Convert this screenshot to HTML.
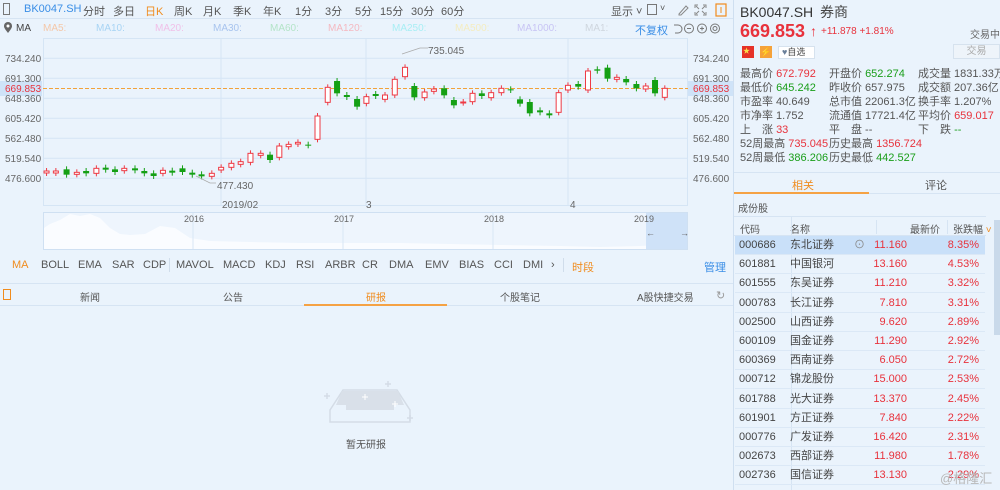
<!DOCTYPE html>
<html><head><meta charset="utf-8"><style>
*{margin:0;padding:0;box-sizing:border-box}
body{width:1000px;height:490px;background:#eaf3fc;font-family:"Liberation Sans","Noto Sans CJK SC",sans-serif;position:relative;overflow:hidden;color:#333}
.a{position:absolute;white-space:nowrap}
.tb{font-size:11px;color:#555;top:3px}
.ma{font-size:10px;top:23px}
.r{color:#e8323c}.g{color:#1a9e1a}
.st{font-size:11px;color:#555;line-height:14px}
.ind{font-size:11px;color:#555;top:259px}
.tab{font-size:10px;color:#555;top:289px}
.row{position:absolute;left:735px;width:250px;height:19px;font-size:11px;border-bottom:1px solid #dbe8f6}
.row span{position:absolute;top:0;line-height:19px}
</style></head><body>
<div class="a" style="left:0;top:0;width:733px;height:19px;border-bottom:1px solid #d6e4f3"></div>
<div class="a" style="left:3px;top:3px;width:7px;height:12px;border:1px solid #777"></div>
<div class="a tb" style="left:24px;color:#3a8ee6">BK0047.SH</div>
<div class="a tb" style="left:83px">分时</div>
<div class="a tb" style="left:113px">多日</div>
<div class="a tb" style="left:145px;color:#f08c1e">日K</div>
<div class="a tb" style="left:174px">周K</div>
<div class="a tb" style="left:203px">月K</div>
<div class="a tb" style="left:233px">季K</div>
<div class="a tb" style="left:263px">年K</div>
<div class="a tb" style="left:295px">1分</div>
<div class="a tb" style="left:325px">3分</div>
<div class="a tb" style="left:355px">5分</div>
<div class="a tb" style="left:380px">15分</div>
<div class="a tb" style="left:411px">30分</div>
<div class="a tb" style="left:441px">60分</div>
<div class="a tb" style="left:611px">显示 ˅</div>
<div class="a" style="left:647px;top:4px;width:10px;height:11px;border:1px solid #777"></div>
<div class="a tb" style="left:660px;font-size:9px">˅</div>
<svg class="a" style="left:676px;top:3px" width="60" height="14"><path d="M3 11 L10 3 L12 5 L5 12 L3 12Z" fill="none" stroke="#888"/><path d="M22 2h-3v3M27 2h3v3M22 12h-3v-3M27 12h3v-3M20 3l3 3M29 3l-3 3M20 11l3-3M29 11l-3-3" stroke="#888" fill="none"/><rect x="40" y="1" width="10" height="12" fill="none" stroke="#f08c1e" stroke-width="1.2"/><line x1="45" y1="4" x2="45" y2="10" stroke="#f08c1e"/></svg>
<svg class="a" style="left:3px;top:22px" width="10" height="12"><path d="M5 11 C1 6 1 5 1 4 A4 4 0 0 1 9 4 C9 5 9 6 5 11Z" fill="#666"/><circle cx="5" cy="4" r="1.5" fill="#fff"/></svg>
<div class="a ma" style="left:16px;color:#444">MA</div>
<div class="a ma" style="left:43px;color:#f4c7a8">MA5:</div>
<div class="a ma" style="left:96px;color:#a8d4f4">MA10:</div>
<div class="a ma" style="left:155px;color:#f0c0e8">MA20:</div>
<div class="a ma" style="left:213px;color:#a8c4ee">MA30:</div>
<div class="a ma" style="left:270px;color:#b4e4c8">MA60:</div>
<div class="a ma" style="left:328px;color:#f4b8c0">MA120:</div>
<div class="a ma" style="left:392px;color:#a8eef4">MA250:</div>
<div class="a ma" style="left:455px;color:#f4ecc0">MA500:</div>
<div class="a ma" style="left:517px;color:#c8c4f4">MA1000:</div>
<div class="a ma" style="left:585px;color:#cfd6de">MA1:</div>
<div class="a" style="left:635px;top:22px;font-size:11px;color:#3a8ee6">不复权</div>
<svg class="a" style="left:672px;top:22px" width="50" height="13"><path d="M2 3h4a4 4 0 0 1 0 8H3" fill="none" stroke="#777"/><circle cx="17" cy="6.5" r="4.5" fill="none" stroke="#777"/><line x1="15" y1="6.5" x2="19" y2="6.5" stroke="#777"/><circle cx="30" cy="6.5" r="4.5" fill="none" stroke="#777"/><path d="M28 6.5h4M30 4.5v4" stroke="#777"/><circle cx="43" cy="6.5" r="4.5" fill="none" stroke="#777"/><circle cx="43" cy="6.5" r="2" fill="none" stroke="#777"/></svg>
<svg class="a" style="left:0;top:38px" width="733" height="220">
<g stroke="#d5e5f5" fill="none">
<rect x="43.5" y="0.5" width="644" height="167"/>
<line x1="221" y1="0" x2="221" y2="168"/><line x1="366" y1="0" x2="366" y2="168"/><line x1="568" y1="0" x2="568" y2="168"/>
<line x1="43" y1="20.3" x2="688" y2="20.3"/><line x1="43" y1="40.3" x2="688" y2="40.3"/><line x1="43" y1="60.3" x2="688" y2="60.3"/><line x1="43" y1="80.3" x2="688" y2="80.3"/><line x1="43" y1="100.3" x2="688" y2="100.3"/><line x1="43" y1="120.3" x2="688" y2="120.3"/><line x1="43" y1="140.3" x2="688" y2="140.3"/>
</g>
<rect x="0" y="43" width="42" height="15" fill="#cfe3f8"/><rect x="688" y="43" width="45" height="15" fill="#cfe3f8"/>
<line x1="43" y1="50.5" x2="688" y2="50.5" stroke="#f2a23a" stroke-dasharray="4,2"/>
<g id="cd"></g>
<polyline points="402,16 420,10 428,10" fill="none" stroke="#aaa" stroke-width=".7"/>
<polyline points="196,138 210,145 216,145" fill="none" stroke="#aaa" stroke-width=".7"/>
<g font-size="10" fill="#666">
<text x="428" y="16">735.045</text><text x="217" y="151">477.430</text>
<text x="5" y="24">734.240</text><text x="5" y="44">691.300</text><text x="5" y="54" fill="#e8323c">669.853</text><text x="5" y="64">648.360</text><text x="5" y="84">605.420</text><text x="5" y="104">562.480</text><text x="5" y="124">519.540</text><text x="5" y="144">476.600</text>
<text x="693" y="24">734.240</text><text x="693" y="44">691.300</text><text x="693" y="54" fill="#e8323c">669.853</text><text x="693" y="64">648.360</text><text x="693" y="84">605.420</text><text x="693" y="104">562.480</text><text x="693" y="124">519.540</text><text x="693" y="144">476.600</text>
<text x="222" y="170">2019/02</text><text x="366" y="170">3</text><text x="570" y="170">4</text>
</g>
<rect x="43.5" y="174.5" width="644" height="37" fill="#eef5fd" stroke="#cfe0f2"/>
<path d="M44 211 L44 190 L50 186 L60 182 L70 176 L80 178 L90 176 L100 180 L110 190 L120 196 L130 197 L145 196 L160 188 L175 190 L190 200 L210 203 L250 204 L300 205 L350 205 L400 205 L450 206 L500 207 L560 208 L600 209 L640 208 L660 207 L680 200 L687 196 L687 211Z" fill="#fafcff"/>
<line x1="193" y1="175" x2="193" y2="211" stroke="#d8e6f5"/><line x1="343" y1="175" x2="343" y2="211" stroke="#d8e6f5"/><line x1="493" y1="175" x2="493" y2="211" stroke="#d8e6f5"/>
<rect x="646" y="175" width="41" height="36" fill="#cfe2f8"/>
<g font-size="9" fill="#666"><text x="184" y="184">2016</text><text x="334" y="184">2017</text><text x="484" y="184">2018</text><text x="634" y="184">2019</text><text x="646" y="198">←</text><text x="680" y="198">→</text></g>
</svg>
<div class="a ind" style="left:12px;color:#f08c1e">MA</div>
<div class="a ind" style="left:41px">BOLL</div>
<div class="a ind" style="left:78px">EMA</div>
<div class="a ind" style="left:112px">SAR</div>
<div class="a ind" style="left:143px">CDP</div>
<div class="a" style="left:169px;top:258px;width:1px;height:14px;background:#d0ddeb"></div>
<div class="a ind" style="left:176px">MAVOL</div>
<div class="a ind" style="left:223px">MACD</div>
<div class="a ind" style="left:265px">KDJ</div>
<div class="a ind" style="left:296px">RSI</div>
<div class="a ind" style="left:325px">ARBR</div>
<div class="a ind" style="left:362px">CR</div>
<div class="a ind" style="left:389px">DMA</div>
<div class="a ind" style="left:425px">EMV</div>
<div class="a ind" style="left:459px">BIAS</div>
<div class="a ind" style="left:494px">CCI</div>
<div class="a ind" style="left:523px">DMI</div>
<div class="a ind" style="left:551px">›</div>
<div class="a" style="left:563px;top:258px;width:1px;height:14px;background:#d0ddeb"></div>
<div class="a ind" style="left:572px;color:#f08c1e">时段</div>
<div class="a ind" style="left:704px;color:#3a8ee6">管理</div>
<div class="a" style="left:0;top:283px;width:733px;height:23px;border-top:1px solid #d6e4f3;border-bottom:1px solid #d6e4f3"></div>
<div class="a" style="left:3px;top:289px;width:8px;height:11px;border:1px solid #f08c1e"></div>
<div class="a tab" style="left:80px">新闻</div>
<div class="a tab" style="left:223px">公告</div>
<div class="a tab" style="left:366px;color:#f08c1e">研报</div>
<div class="a tab" style="left:500px">个股笔记</div>
<div class="a tab" style="left:637px">A股快捷交易</div>
<div class="a tab" style="left:716px;font-size:11px;color:#999">↻</div>
<div class="a" style="left:304px;top:304px;width:143px;height:2px;background:#f5a244"></div>
<svg class="a" style="left:315px;top:380px" width="105" height="45"><g stroke="#d4dce6" fill="none" stroke-width="1.5"><path d="M15 30 L28 10 H82 L95 30 V42 H15Z"/><path d="M12 13v6M9 16h6M95 35v6M92 38h6M73 1v6M70 4h6"/></g><path d="M27 11 H83 L89 25 H79 V30 H31 V25 H21Z" fill="#d9e0e9"/><g stroke="#fff"><path d="M50 14v6M47 17h6M80 21v6M77 24h6"/></g></svg>
<div class="a" style="left:346px;top:436px;font-size:10px;color:#555">暂无研报</div>
<div class="a" style="left:733px;top:0;width:1px;height:490px;background:#cfdff0"></div>
<div class="a" style="left:740px;top:3px;font-size:14px;color:#333;line-height:18px">BK0047.SH</div>
<div class="a" style="left:820px;top:3px;font-size:14px;color:#444;line-height:18px">券商</div>
<div class="a" style="left:740px;top:20px;font-size:18px;font-weight:bold;color:#e8323c;line-height:22px">669.853</div>
<div class="a" style="left:810px;top:22px;font-size:14px;font-weight:bold;color:#e8323c;line-height:18px">↑</div>
<div class="a" style="left:821px;top:26px;font-size:10px;color:#e8323c">+11.878 +1.81%</div>
<div class="a" style="left:970px;top:26px;font-size:10px;color:#666">交易中</div>
<div class="a" style="left:742px;top:46px;width:12px;height:12px;background:#e63228"><span style="color:#fbe04a;font-size:7px;position:absolute;left:1px;top:0">★</span></div>
<div class="a" style="left:760px;top:46px;width:12px;height:12px;background:#f5a23a;color:#fff;font-size:9px;text-align:center;line-height:12px">⚡</div>
<div class="a" style="left:778px;top:46px;width:37px;height:13px;background:#fff;border:1px solid #d6e2ee;font-size:9px;color:#444;padding-left:3px;line-height:11px"><span style="color:#6a7f99">♥</span>自选</div>
<div class="a" style="left:953px;top:44px;width:47px;height:15px;border:1px solid #d6e2ee;background:#eef4fa;font-size:10px;color:#aaa;text-align:center;line-height:13px">交易</div>
<div class="a st" style="left:740px;top:67px">最高价 <span class="r">672.792</span></div>
<div class="a st" style="left:740px;top:81px">最低价 <span class="g">645.242</span></div>
<div class="a st" style="left:740px;top:95px">市盈率 40.649</div>
<div class="a st" style="left:740px;top:109px">市净率 1.752</div>
<div class="a st" style="left:740px;top:123px">上　涨 <span class="r">33</span></div>
<div class="a st" style="left:740px;top:137px">52周最高 <span class="r">735.045</span></div>
<div class="a st" style="left:740px;top:151px">52周最低 <span class="g">386.206</span></div>
<div class="a st" style="left:829px;top:67px">开盘价 <span class="g">652.274</span></div>
<div class="a st" style="left:829px;top:81px">昨收价 657.975</div>
<div class="a st" style="left:829px;top:95px">总市值 22061.3亿</div>
<div class="a st" style="left:829px;top:109px">流通值 17721.4亿</div>
<div class="a st" style="left:829px;top:123px">平　盘 --</div>
<div class="a st" style="left:829px;top:137px">历史最高 <span class="r">1356.724</span></div>
<div class="a st" style="left:829px;top:151px">历史最低 <span class="g">442.527</span></div>
<div class="a st" style="left:918px;top:67px">成交量 1831.33万手</div>
<div class="a st" style="left:918px;top:81px">成交额 207.36亿</div>
<div class="a st" style="left:918px;top:95px">换手率 1.207%</div>
<div class="a st" style="left:918px;top:109px">平均价 <span class="r">659.017</span></div>
<div class="a st" style="left:918px;top:123px">下　跌 <span class="g">--</span></div>
<div class="a" style="left:865px;top:158px;font-size:9px;color:#888">^</div>
<div class="a" style="left:734px;top:172px;width:266px;height:22px;border-top:1px solid #d6e4f3;border-bottom:1px solid #d6e4f3"></div>
<div class="a" style="left:792px;top:177px;font-size:11px;color:#f08c1e">相关</div>
<div class="a" style="left:925px;top:177px;font-size:11px;color:#555">评论</div>
<div class="a" style="left:734px;top:192px;width:135px;height:2px;background:#f5a244"></div>
<div class="a" style="left:738px;top:200px;font-size:10px;color:#555">成份股</div>
<div class="a" style="left:734px;top:216px;width:252px;height:20px;border-top:1px solid #d6e4f3;border-bottom:1px solid #d6e4f3;font-size:10px;color:#555">
<span class="a" style="left:6px;top:4px">代码</span><span class="a" style="left:56px;top:4px">名称</span><span class="a" style="left:142px;top:3px;width:1px;height:14px;background:#d6e4f3"></span><span class="a" style="left:176px;top:4px">最新价</span><span class="a" style="left:213px;top:3px;width:1px;height:14px;background:#d6e4f3"></span><span class="a" style="left:219px;top:4px">张跌幅 <span style="color:#f08c1e">˅</span></span>
</div>
<div class="a" style="left:791px;top:216px;width:1px;height:274px;background:#d6e4f3"></div>
<div class="a" style="left:994px;top:220px;width:6px;height:115px;background:#c9d9ea"></div>
<div id="rows"></div>
<div class="a" style="left:940px;top:468px;font-size:13px;color:#b8b8b8">@格隆汇</div>
<script>
var rows=[["000686","东北证券","11.160","8.35%"],["601881","中国银河","13.160","4.53%"],["601555","东吴证券","11.210","3.32%"],["000783","长江证券","7.810","3.31%"],["002500","山西证券","9.620","2.89%"],["600109","国金证券","11.290","2.92%"],["600369","西南证券","6.050","2.72%"],["000712","锦龙股份","15.000","2.53%"],["601788","光大证券","13.370","2.45%"],["601901","方正证券","7.840","2.22%"],["000776","广发证券","16.420","2.31%"],["002673","西部证券","11.980","1.78%"],["002736","国信证券","13.130","2.29%"]];
var h="";rows.forEach(function(r,i){var t=236+i*19.2;h+='<div class="row" style="top:'+t+'px;'+(i==0?'background:#c9e0f9;':'')+'"><span style="left:4px;color:#444">'+r[0]+'</span><span style="left:55px;color:#444">'+r[1]+'</span>'+(i==0?'<span style="left:119px;color:#888">⊙</span>':'')+'<span style="right:78px;color:#e8323c">'+r[2]+'</span><span style="right:6px;color:#e8323c">'+r[3]+'</span></div>';});
document.getElementById("rows").innerHTML=h;
var c=[[100,"r",363,369],[120,"r",363,369],[143,"g",358,374],[165,"r",367,373],[185,"g",363,370],[207,"r",355,370],[227,"g",353,359],[247,"g",358,366],[267,"r",355,362],[290,"g",355,361],[310,"g",363,370],[330,"g",370,378],[350,"r",361,370],[370,"g",362,368],[392,"g",355,366],[413,"g",368,374],[433,"g",373,379],[455,"r",370,379],[475,"r",352,360],[497,"r",340,352],[517,"r",335,343],[538,"r",310,337],[560,"r",310,316],[580,"g",314,330],[600,"r",288,322],[620,"r",283,290],[640,"r",277,282],[662,"g",284,286],[682,"r",198,268],[704,"r",112,157],[724,"g",93,130],[745,"g",135,141],[767,"g",147,170],[787,"r",140,160],[807,"g",132,138],[827,"r",135,148],[848,"r",88,135],[870,"r",52,80],[890,"g",108,142],[912,"r",126,143],[932,"r",117,124],[954,"g",115,136],[975,"g",150,166],[995,"r",156,158],[1015,"r",130,155],[1035,"g",130,138],[1055,"r",128,143],[1077,"r",115,128],[1097,"g",118,120],[1117,"g",148,161],[1138,"g",156,190],[1160,"g",181,187],[1180,"g",190,196],[1200,"r",128,187],[1220,"r",106,120],[1242,"g",102,110],[1263,"r",63,120],[1283,"g",58,62],[1305,"g",53,86],[1325,"r",82,88],[1345,"g",87,97],[1367,"g",102,115],[1387,"r",108,117],[1407,"g",90,130],[1428,"r",115,142]];
var s="";c.forEach(function(k){var x=k[0]/2.148,y1=k[2]/3+12,y2=k[3]/3+12,col=k[1]=="r"?"#ee3a44":"#14a014";var h2=Math.max(y2-y1,1);
s+='<line x1="'+x+'" y1="'+(y1-3)+'" x2="'+x+'" y2="'+(y2+3)+'" stroke="'+col+'" stroke-width="1"/>';
if(k[1]=="r")s+='<rect x="'+(x-2.5)+'" y="'+y1+'" width="5" height="'+h2+'" fill="#fff" stroke="'+col+'" stroke-width="1"/>';else s+='<rect x="'+(x-3)+'" y="'+y1+'" width="6" height="'+h2+'" fill="'+col+'"/>';});
document.getElementById("cd").innerHTML=s;
</script>
</body></html>
